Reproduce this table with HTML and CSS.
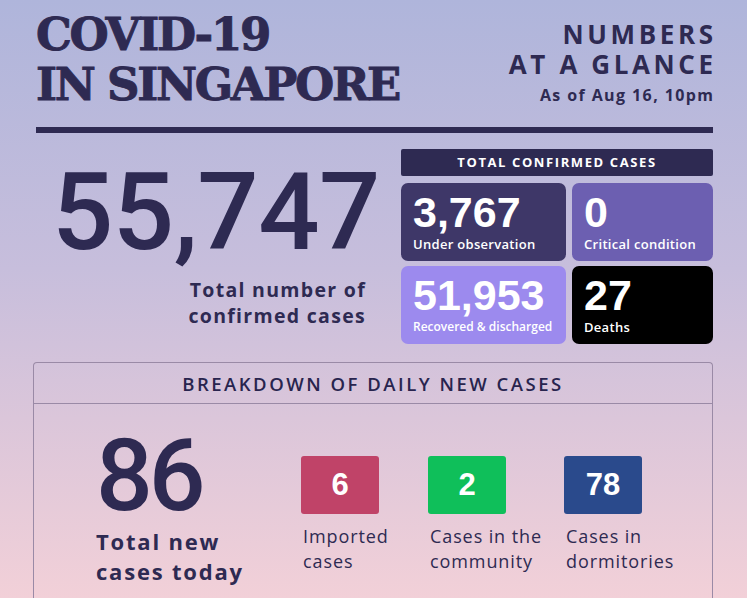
FILE: index.html
```html
<!DOCTYPE html>
<html lang="en">
<head>
<meta charset="utf-8">
<title>COVID-19 in Singapore</title>
<link rel="stylesheet" href="styles.css">
</head>
<body>
<div class="page">
  <header class="top">
    <h1 class="title">COVID-19<br>IN SINGAPORE</h1>
    <div class="glance">
      <div class="glance-title">NUMBERS<br>AT A GLANCE</div>
      <div class="glance-date">As of Aug 16, 10pm</div>
    </div>
  </header>
  <div class="rule"></div>

  <section class="summary">
    <div class="total">
      <div class="total-num">55,747</div>
      <div class="total-label">Total number of<br>confirmed cases</div>
    </div>
    <div class="panel">
      <div class="panel-head">TOTAL CONFIRMED CASES</div>
      <div class="grid">
        <div class="cell cell-obs"><div class="cell-num">3,767</div><div class="cell-label">Under observation</div></div>
        <div class="cell cell-crit"><div class="cell-num">0</div><div class="cell-label">Critical condition</div></div>
        <div class="cell cell-rec"><div class="cell-num">51,953</div><div class="cell-label small">Recovered &amp; discharged</div></div>
        <div class="cell cell-dead"><div class="cell-num">27</div><div class="cell-label">Deaths</div></div>
      </div>
    </div>
  </section>

  <section class="daily">
    <div class="daily-head">BREAKDOWN OF DAILY NEW CASES</div>
    <div class="daily-body">
      <div class="new-total">
        <div class="new-num">86</div>
        <div class="new-label">Total new<br>cases today</div>
      </div>
      <div class="kinds">
        <div class="kind"><div class="box box-imp">6</div><div class="kind-label">Imported<br>cases</div></div>
        <div class="kind"><div class="box box-com">2</div><div class="kind-label">Cases in the<br>community</div></div>
        <div class="kind"><div class="box box-dorm">78</div><div class="kind-label">Cases in<br>dormitories</div></div>
      </div>
    </div>
  </section>
</div>
</body>
</html>
```

FILE: styles.css
```css
html, body {
  margin: 0;
  padding: 0;
}
body {
  width: 747px;
  height: 598px;
  overflow: hidden;
  background: linear-gradient(180deg, #afb5db 0%, #c7bedc 45%, #dbc6da 70%, #f2d0d8 100%);
  color: #2e2a52;
  font-family: "Open Sans", "Liberation Sans", sans-serif;
}
.page {
  padding: 0 34px 0 36px;
}
.top {
  display: flex;
  justify-content: space-between;
  align-items: flex-start;
  padding-top: 10px;
  height: 100px;
}
.title {
  margin: 0;
  font-family: "DejaVu Serif", "Liberation Serif", serif;
  font-weight: 700;
  font-size: 45px;
  line-height: 50px;
  letter-spacing: -2.3px;
  -webkit-text-stroke: 0.9px #2e2a52;
}
.glance {
  text-align: right;
  padding-top: 9px;
}
.glance-title {
  font-weight: 700;
  font-size: 26px;
  line-height: 30px;
  letter-spacing: 3.6px;
  margin-right: -3.6px;
}
.glance-date {
  font-weight: 700;
  font-size: 16px;
  line-height: 20px;
  margin-top: 6px;
  letter-spacing: 1.4px;
  margin-right: -1.4px;
}
.rule {
  height: 6px;
  background: #2e2a52;
  margin-top: 17px;
}

.summary {
  display: flex;
  margin-top: 16px;
}
.total {
  width: 344px;
  display: flex;
  flex-direction: column;
  align-items: flex-end;
}
.total-num {
  font-family: Roboto, "Liberation Sans", sans-serif;
  font-weight: 500;
  font-size: 108px;
  line-height: 100px;
  margin-top: 13px;
  letter-spacing: -0.5px;
}
.total-label {
  text-align: right;
  font-weight: 700;
  font-size: 19.5px;
  line-height: 26px;
  letter-spacing: 1.3px;
  margin-right: 14px;
  margin-top: 15px;
}
.panel {
  margin-left: 21px;
  width: 312px;
}
.panel-head {
  background: #2e2a52;
  color: #fff;
  height: 27px;
  line-height: 27px;
  text-align: center;
  font-weight: 700;
  font-size: 13px;
  letter-spacing: 1.6px;
  border-radius: 2px;
}
.grid {
  display: grid;
  grid-template-columns: 165px 141px;
  grid-template-rows: 78px 78px;
  gap: 5px 6px;
  margin-top: 7px;
}
.cell {
  border-radius: 7px;
  color: #fff;
  padding: 6px 0 0 12px;
}
.cell-obs { background: #3e3768; }
.cell-crit { background: #6c5fb1; }
.cell-rec { background: #9c8aee; }
.cell-dead { background: #000; }
.cell-num {
  font-family: "Liberation Sans", Arial, sans-serif;
  font-weight: 700;
  font-size: 43px;
  line-height: 46px;
}
.cell-label {
  font-weight: 600;
  font-size: 13px;
  line-height: 18px;
  letter-spacing: 0.3px;
}
.cell-label.small {
  font-size: 12px;
  letter-spacing: 0;
}

.daily {
  margin: 18px 0 0 -3px;
  border: 1px solid #9a8aa6;
  border-bottom: none;
  border-radius: 4px 4px 0 0;
  height: 235px;
}
.daily-head {
  height: 40px;
  line-height: 42px;
  text-align: center;
  border-bottom: 1px solid #9a8aa6;
  font-weight: 600;
  font-size: 18.5px;
  letter-spacing: 2.5px;
  color: #28244e;
}
.daily-body {
  display: flex;
  padding: 22px 0 0 62px;
}
.new-total {
  width: 205px;
}
.new-num {
  font-family: Roboto, "Liberation Sans", sans-serif;
  font-weight: 500;
  font-size: 100px;
  line-height: 100px;
  letter-spacing: -4px;
}
.new-label {
  font-weight: 700;
  font-size: 22px;
  line-height: 30px;
  letter-spacing: 1.8px;
  margin-top: 0;
}
.kinds {
  display: grid;
  grid-template-columns: 127px 136px auto;
  padding-top: 30px;
}
.box {
  width: 78px;
  height: 58px;
  border-radius: 3px;
  color: #fff;
  text-align: center;
  line-height: 58px;
  font-family: "Liberation Sans", Arial, sans-serif;
  font-weight: 700;
  font-size: 31px;
}
.box-imp { background: #c04368; }
.box-com { background: #0fbf5a; }
.box-dorm { background: #2a4a8c; }
.kind-label {
  font-weight: 400;
  font-size: 18px;
  line-height: 25px;
  letter-spacing: 0.9px;
  margin: 10px 0 0 2px;
}
```
